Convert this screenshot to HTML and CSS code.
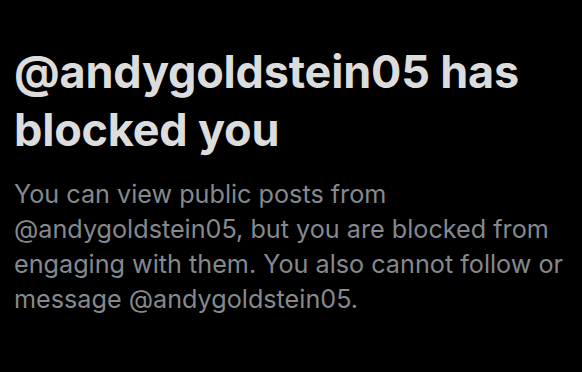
FILE: index.html
```html
<!DOCTYPE html>
<html>
<head>
<meta charset="utf-8">
<link rel="stylesheet" href="styles.css">
</head>
<body>
<main class="blocked">
  <h1 class="blocked-title">@andygoldstein05 has blocked you</h1>
  <p class="blocked-text">You can view public posts from @andygoldstein05, but you are blocked from engaging with them. You also cannot follow or message @andygoldstein05.</p>
</main>
</body>
</html>
```
FILE: styles.css
```css
html, body {
  margin: 0;
  padding: 0;
  background: #000;
  width: 582px;
  height: 372px;
  overflow: hidden;
}
.blocked {
  padding: 43px 14px 0 14px;
  font-family: Inter, "Liberation Sans", sans-serif;
}
.blocked-title {
  margin: 0;
  font-size: 45px;
  line-height: 58px;
  font-weight: 700;
  color: #dcdcdc;
  letter-spacing: -0.2px;
}
.blocked-text {
  margin: 18px 0 0 0;
  font-size: 25.2px;
  line-height: 35px;
  font-weight: 400;
  color: #85898d;
}
```
